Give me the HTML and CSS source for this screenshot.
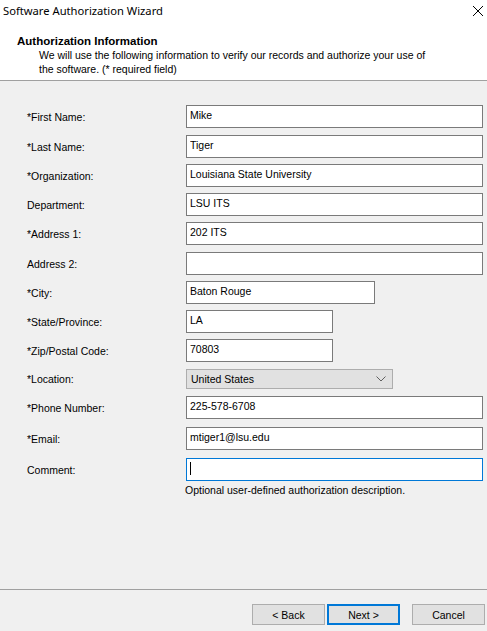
FILE: index.html
```html
<!DOCTYPE html>
<html>
<head>
<meta charset="utf-8">
<link rel="stylesheet" href="styles.css">
</head>
<body>
<div class="window">
  <div class="top">
    <div class="titlebar">
      <span class="title">Software Authorization Wizard</span>
      <svg class="close" width="12" height="12" viewBox="0 0 12 12"><path d="M1 1L11 11M11 1L1 11" stroke="#000" stroke-width="1" fill="none"/></svg>
    </div>
    <div class="header">
      <div class="h-title">Authorization Information</div>
      <div class="h-desc">We will use the following information to verify our records and authorize your use of the software. (* required field)</div>
    </div>
  </div>
  <div class="form">
    <div class="row"><label>*First Name:</label><input class="tb full" value="Mike" readonly></div>
    <div class="row g7"><label>*Last Name:</label><input class="tb full" value="Tiger" readonly></div>
    <div class="row"><label>*Organization:</label><input class="tb full" value="Louisiana State University" readonly></div>
    <div class="row"><label>Department:</label><input class="tb full" value="LSU ITS" readonly></div>
    <div class="row"><label>*Address 1:</label><input class="tb full" value="202 ITS" readonly></div>
    <div class="row g7"><label>Address 2:</label><input class="tb full" value="" readonly></div>
    <div class="row"><label>*City:</label><input class="tb city" value="Baton Rouge" readonly></div>
    <div class="row"><label>*State/Province:</label><input class="tb short" value="LA" readonly></div>
    <div class="row"><label>*Zip/Postal Code:</label><input class="tb short" value="70803" readonly></div>
    <div class="row g7 combo-row"><label>*Location:</label>
      <div class="combo"><span>United States</span>
        <svg width="10" height="6" viewBox="0 0 10 6"><path d="M0.5 0.5L5 5L9.5 0.5" stroke="#606060" stroke-width="1" fill="none"/></svg>
      </div>
    </div>
    <div class="row g7"><label>*Phone Number:</label><input class="tb full" value="225-578-6708" readonly></div>
    <div class="row g8"><label>*Email:</label><input class="tb full" value="mtiger1@lsu.edu" readonly></div>
    <div class="row g8"><label>Comment:</label>
      <div class="focus-wrap"><input class="tb full focused" value="" readonly><span class="caret"></span></div>
    </div>
    <div class="row help"><span></span><span class="help-text">Optional user-defined authorization description.</span></div>
  </div>
  <div class="spacer"></div>
  <div class="footer">
    <button class="btn">&lt; Back</button>
    <button class="btn default">Next &gt;</button>
    <button class="btn cancel">Cancel</button>
  </div>
</div>
</body>
</html>
```

FILE: styles.css
```css
* { box-sizing: border-box; }
html, body { margin: 0; padding: 0; }
body {
  width: 487px;
  height: 631px;
  background: #f0f0f0;
  font-family: "Liberation Sans", Arial, sans-serif;
  font-size: 10.5px;
  color: #000;
  overflow: hidden;
}
.window {
  display: flex;
  flex-direction: column;
  height: 631px;
}
.top {
  background: #fff;
  height: 81px;
  border-bottom: 1px solid #a0a0a0;
}
.titlebar {
  height: 21px;
  display: flex;
  align-items: center;
  justify-content: space-between;
  padding: 0 2px 0 3px;
}
.title {
  font-family: "Noto Sans", "Open Sans", sans-serif;
  font-size: 11.2px;
  color: #000;
}
.close { margin-right: 1px; }
.header {
  padding: 13px 20px 0 17px;
}
.h-title {
  font-weight: bold;
  font-size: 11.5px;
  line-height: 14px;
}
.h-desc {
  padding-left: 22px;
  line-height: 14px;
  width: 420px;
}
.form {
  padding: 24px 4px 0 27px;
  display: flex;
  flex-direction: column;
}
.row {
  display: grid;
  grid-template-columns: 159px 1fr;
  align-items: center;
  height: 23px;
  margin-top: 6px;
}
.row:first-child { margin-top: 0; }
.row.g7 { margin-top: 7px; }
.row.g8 { margin-top: 8px; }
.row.combo-row { height: 20px; }
label { font-size: 10.5px; }
.tb {
  height: 23px;
  border: 1px solid #7a7a7a;
  background: #fff;
  font-family: "Liberation Sans", Arial, sans-serif;
  font-size: 10.5px;
  color: #000;
  padding: 0 3px 3px 3px;
  margin: 0;
  outline: none;
  display: block;
}
.tb.full { width: 297px; }
.tb.city { width: 189px; }
.tb.short { width: 147px; }
.tb.focused { border-color: #0078d7; }
.focus-wrap { position: relative; width: 297px; }
.caret {
  position: absolute;
  left: 4px;
  top: 4px;
  width: 1px;
  height: 13px;
  background: #000;
}
.combo {
  width: 207px;
  height: 20px;
  background: #e1e1e1;
  border: 1px solid #adadad;
  display: flex;
  align-items: center;
  justify-content: space-between;
  padding: 0 6px 0 4px;
}
.combo svg { display: block; }
.row.help { height: 14px; margin-top: 2px; }
.help-text { margin-left: -1px; }
.spacer { flex: 1; }
.footer {
  border-top: 1px solid #a0a0a0;
  height: 42px;
  display: flex;
  justify-content: flex-end;
  align-items: flex-start;
  padding: 14px 2px 0 0;
}
.btn {
  width: 73px;
  height: 21px;
  background: #e1e1e1;
  border: 1px solid #adadad;
  font-family: "Liberation Sans", Arial, sans-serif;
  font-size: 10.5px;
  color: #000;
  padding: 0;
  margin: 0;
}
.btn.default {
  width: 73px;
  border: 2px solid #0078d7;
  margin-left: 2px;
}
.btn.cancel { margin-left: 12px; }
```
